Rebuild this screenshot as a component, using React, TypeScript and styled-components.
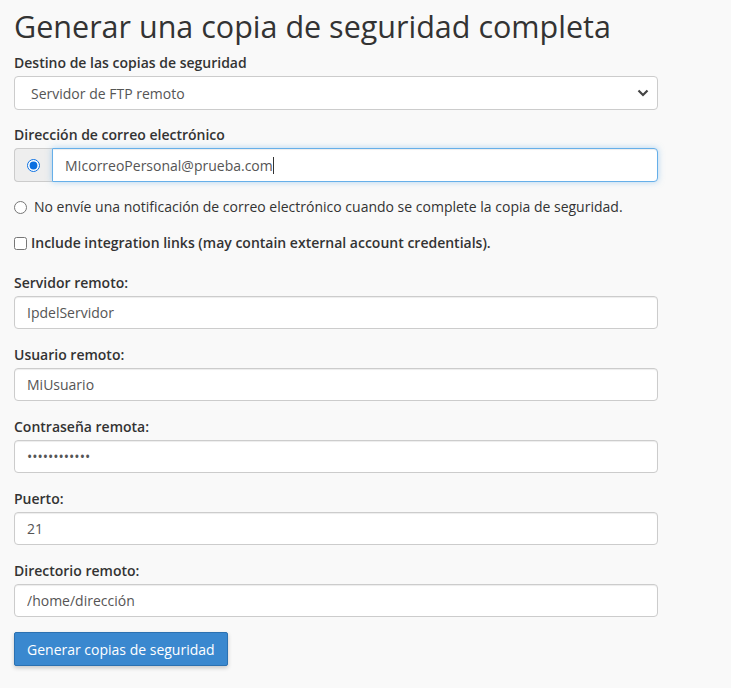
import styled, { createGlobalStyle } from 'styled-components';

const GlobalStyle = createGlobalStyle`
  html, body {
    margin: 0;
    padding: 0;
    background: #f9f9f9;
    font-family: "Open Sans", "Liberation Sans", sans-serif;
    color: #333;
  }
`;

const Page = styled.div`
  padding: 10px 14px 20px;
  width: 644px;
`;

const Title = styled.h1`
  font-size: 30.5px;
  font-weight: 400;
  line-height: 33px;
  margin: 0 0 8px;
  color: #333;
  white-space: nowrap;
`;

const Group = styled.div<{ $gap?: number }>`
  margin-bottom: ${(p) => p.$gap ?? 14}px;
`;

const Label = styled.label`
  display: block;
  font-size: 14px;
  font-weight: 600;
  line-height: 20px;
  padding-top: 2px;
  margin-bottom: 3px;
  color: #333;
`;

const Field = styled.input<{ $focused?: boolean }>`
  display: block;
  box-sizing: border-box;
  width: 100%;
  height: 33px;
  padding: 6px 12px;
  font-family: inherit;
  font-size: 14px;
  color: #555;
  background: #fff;
  border: 1px solid ${(p) => (p.$focused ? '#66afe9' : '#ccc')};
  border-radius: 4px;
  box-shadow: ${(p) =>
    p.$focused
      ? 'inset 0 1px 1px rgba(0,0,0,.075), 0 0 6px rgba(102,175,233,.5)'
      : 'inset 0 1px 1px rgba(0,0,0,.075)'};
  outline: none;
`;

const Select = styled.select`
  display: block;
  box-sizing: border-box;
  width: 100%;
  height: 34px;
  padding: 6px 30px 6px 16px;
  font-family: inherit;
  font-size: 14px;
  color: #555;
  border: 1px solid #ccc;
  border-radius: 4px;
  appearance: none;
  background: #fff
    url("data:image/svg+xml;utf8,<svg xmlns='http://www.w3.org/2000/svg' width='12' height='8' viewBox='0 0 12 8'><path d='M1.5 1.5 L6 6 L10.5 1.5' fill='none' stroke='%23444' stroke-width='2.2'/></svg>")
    no-repeat right 8px center;
  outline: none;
`;

const InputGroup = styled.div`
  display: flex;
  height: 34px;
`;

const Addon = styled.span`
  box-sizing: border-box;
  width: 38px;
  display: flex;
  align-items: center;
  justify-content: center;
  background: #eee;
  border: 1px solid #ccc;
  border-right: none;
  border-radius: 4px 0 0 4px;

  input {
    margin: 0;
    width: 13px;
    height: 13px;
    accent-color: #0b6fe0;
  }
`;

const GroupField = styled(Field)`
  flex: 1;
  height: 34px;
  border-radius: 0 4px 4px 0;
`;

const Caret = styled.span`
  display: inline-block;
  width: 1px;
  height: 17px;
  background: #333;
  vertical-align: middle;
`;

const FakeText = styled.div`
  position: relative;
  flex: 1;
  display: flex;
`;

const CaretLayer = styled.span`
  position: absolute;
  left: 13px;
  top: 0;
  bottom: 0;
  display: flex;
  align-items: center;
  font-size: 14px;
  color: transparent;
  pointer-events: none;
`;

const OptionRow = styled.label<{ $bold?: boolean; $top: number; $gap: number }>`
  display: flex;
  align-items: center;
  gap: ${(p) => p.$gap}px;
  margin-top: ${(p) => p.$top}px;
  font-size: 14px;
  line-height: 20px;
  font-weight: ${(p) => (p.$bold ? 600 : 400)};
  color: #333;

  input {
    margin: 0;
    width: 13px;
    height: 13px;
  }
`;

const Remote = styled.div`
  margin-top: 18px;
`;

const Button = styled.button`
  margin-top: 1px;
  height: 34px;
  padding: 0 12px;
  font-family: inherit;
  font-size: 14px;
  color: #fff;
  background: #3a88cf;
  border: 1px solid #2b71b1;
  border-radius: 2px;
  box-shadow: 0 2px 4px rgba(0, 0, 0, 0.2);
  cursor: pointer;
`;

const email = 'MIcorreoPersonal@prueba.com';

const App: React.FC = () => {
  return (
    <>
      <GlobalStyle />
      <Page>
        <Title>Generar una copia de seguridad completa</Title>
        <Group $gap={13}>
          <Label>Destino de las copias de seguridad</Label>
          <Select defaultValue="ftp">
            <option value="home">Directorio de inicio</option>
            <option value="ftp">Servidor de FTP remoto</option>
            <option value="scp">Copia segura remota (SCP)</option>
          </Select>
        </Group>
        <Group $gap={0}>
          <Label>Dirección de correo electrónico</Label>
          <InputGroup>
            <Addon>
              <input type="radio" name="notify" defaultChecked />
            </Addon>
            <FakeText>
              <GroupField $focused readOnly value={email} />
              <CaretLayer>
                {email}
                <Caret />
              </CaretLayer>
            </FakeText>
          </InputGroup>
        </Group>
        <OptionRow $top={15} $gap={7}>
          <input type="radio" name="notify" />
          No envíe una notificación de correo electrónico cuando se complete la copia de seguridad.
        </OptionRow>
        <OptionRow $bold $top={16} $gap={4}>
          <input type="checkbox" />
          Include integration links (may contain external account credentials).
        </OptionRow>
        <Remote>
          <Group>
            <Label>Servidor remoto:</Label>
            <Field readOnly value="IpdelServidor" />
          </Group>
          <Group>
            <Label>Usuario remoto:</Label>
            <Field readOnly value="MiUsuario" />
          </Group>
          <Group>
            <Label>Contraseña remota:</Label>
            <Field type="password" readOnly value="contraseña12" />
          </Group>
          <Group>
            <Label>Puerto:</Label>
            <Field readOnly value="21" />
          </Group>
          <Group>
            <Label>Directorio remoto:</Label>
            <Field readOnly value="/home/dirección" />
          </Group>
        </Remote>
        <Button>Generar copias de seguridad</Button>
      </Page>
    </>
  );
};

export default App;
